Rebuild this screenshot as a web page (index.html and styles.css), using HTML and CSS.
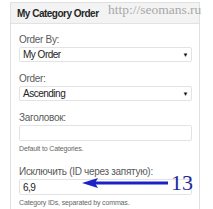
FILE: index.html
```html
<!DOCTYPE html>
<html>
<head>
<meta charset="utf-8">
<link rel="stylesheet" href="styles.css">
</head>
<body>
<div class="panel">
  <div class="head">My Category Order</div>
  <div class="content">
    <div class="field">
      <div class="label">Order By:</div>
      <div class="select"><span>My Order</span><span class="caret">&#9660;</span></div>
    </div>
    <div class="field">
      <div class="label">Order:</div>
      <div class="select"><span>Ascending</span><span class="caret">&#9660;</span></div>
    </div>
    <div class="field">
      <div class="label">Заголовок:</div>
      <div class="input"></div>
      <div class="hint">Default to Categories.</div>
    </div>
    <div class="field last">
      <div class="label">Исключить (ID через запятую):</div>
      <div class="input"><span>6,9</span></div>
      <div class="hint">Category IDs, separated by commas.</div>
    </div>
  </div>
</div>
<div class="watermark">http://seomans.ru</div>
<div class="note">
  <svg width="86" height="12" viewBox="0 0 86 12">
    <path d="M12 6 H86" stroke="#1b22c8" stroke-width="3"/>
    <path d="M0 6 L16 1 L13 6 L16 11 Z" fill="#1b22c8"/>
  </svg>
  <span class="num">13</span>
</div>
</body>
</html>
```
FILE: styles.css
```css
html, body {
  margin: 0;
  padding: 0;
  background: #fff;
}
body {
  width: 213px;
  height: 209px;
  overflow: hidden;
  position: relative;
  font-family: "Liberation Sans", Arial, sans-serif;
}
.panel {
  margin: 2px 0 0 10px;
  width: 190px;
  height: 207px;
  overflow: hidden;
  border: 1px solid #e0e0e0;
  border-bottom: none;
  box-sizing: border-box;
}
.head {
  height: 20px;
  background: #f3f3f3;
  border-bottom: 1px solid #e2e2e2;
  font-weight: bold;
  font-size: 10px;
  letter-spacing: -0.5px;
  color: #262626;
  line-height: 22px;
  padding-left: 6px;
}
.content {
  padding: 10px 7px 0 8px;
  display: flex;
  flex-direction: column;
  gap: 11px;
}
.field {
  display: flex;
  flex-direction: column;
}
.field.last {
  margin-top: 2px;
}
.label {
  font-size: 10px;
  letter-spacing: -0.3px;
  line-height: 12px;
  color: #5a5a5a;
  margin-bottom: 1px;
}
.select, .input {
  height: 13px;
  border: 1px solid #e3e3e3;
  border-radius: 2px;
  background: #fff;
  display: flex;
  align-items: center;
  justify-content: space-between;
  padding: 0 3px 0 3px;
  font-size: 10px;
  letter-spacing: -0.5px;
  color: #222;
}
.input {
  height: 14px;
}
.caret {
  font-size: 6px;
  color: #111;
}
.hint {
  margin-top: 3px;
  font-size: 7px;
  letter-spacing: -0.15px;
  line-height: 9px;
  color: #666;
}
.watermark {
  position: absolute;
  left: 108px;
  top: 2px;
  font-family: "Liberation Serif", "Times New Roman", serif;
  font-size: 13.5px;
  color: #a8a8a8;
}
.note {
  position: absolute;
  left: 82px;
  top: 172px;
  display: flex;
  align-items: center;
  gap: 3px;
}
.note svg {
  display: block;
}
.num {
  font-family: "Liberation Serif", "Times New Roman", serif;
  font-size: 22px;
  line-height: 22px;
  color: #1b2a9a;
}
```
